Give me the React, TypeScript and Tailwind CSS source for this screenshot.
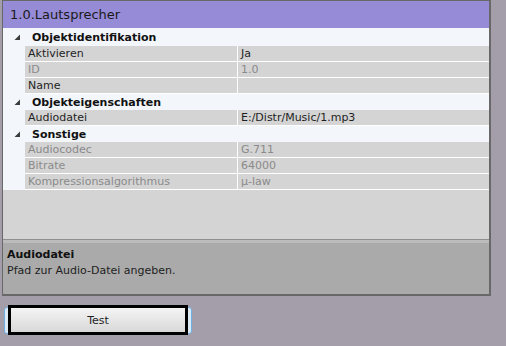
import React from "react";

interface RowType {
  label: string;
  value: string;
  disabled?: boolean;
}

interface GroupType {
  title: string;
  rows: RowType[];
}

const groups: GroupType[] = [
  {
    title: "Objektidentifikation",
    rows: [
      { label: "Aktivieren", value: "Ja" },
      { label: "ID", value: "1.0", disabled: true },
      { label: "Name", value: "" },
    ],
  },
  {
    title: "Objekteigenschaften",
    rows: [{ label: "Audiodatei", value: "E:/Distr/Music/1.mp3" }],
  },
  {
    title: "Sonstige",
    rows: [
      { label: "Audiocodec", value: "G.711", disabled: true },
      { label: "Bitrate", value: "64000", disabled: true },
      { label: "Kompressionsalgorithmus", value: "µ-law", disabled: true },
    ],
  },
];

const Arrow = () => (
  <svg width="7" height="7" viewBox="0 0 7 7" className="shrink-0">
    <polygon points="6,0.5 6,6 0.5,6" fill="#3c3c3c" />
  </svg>
);

const App = () => {
  return (
    <div
      className="w-[506px] h-[346px] bg-[#a39eaa] overflow-hidden text-[11px] leading-none text-[#1e1e1e]"
      style={{ fontFamily: '"DejaVu Sans", Verdana, sans-serif' }}
    >
      <div className="ml-[2px] w-[489px] border-l border-t border-b-2 border-r-2 border-[#686868] flex flex-col">
        <div className="h-[27px] bg-[#968bd6] flex items-center pl-[7px] text-[13px] text-[#1a1a1a]">
          1.0.Lautsprecher
        </div>
        <div className="h-[211px] bg-[#d4d4d4] flex flex-col">
          {groups.map((g, gi) => (
            <div key={g.title} className="flex flex-col">
              <div
                className={`${gi === 0 ? "h-[18px]" : "h-[16px]"} bg-[#f3f6fb] flex items-center gap-[11px] pl-[11px] font-bold text-[#111]`}
              >
                <Arrow />
                <span>{g.title}</span>
              </div>
              {g.rows.map((r) => (
                <div key={r.label} className="h-[16px] flex bg-[#f3f6fb]">
                  <div
                    className={`ml-[22px] w-[213px] border-b border-r border-white bg-[#d4d4d4] flex items-center pl-[3px] ${r.disabled ? "text-[#8a8a8a]" : "text-[#1e1e1e]"}`}
                  >
                    {r.label}
                  </div>
                  <div
                    className={`flex-1 border-b border-white bg-[#d4d4d4] flex items-center pl-[3px] ${r.disabled ? "text-[#8a8a8a]" : "text-[#1e1e1e]"}`}
                  >
                    {r.value}
                  </div>
                </div>
              ))}
            </div>
          ))}
        </div>
        <div className="h-[1px] bg-[#8f8f8f]" />
        <div className="h-[3px] bg-[#bcbcbc]" />
        <div className="h-[51px] bg-[#aaaaaa] px-[4px] pt-[6px] flex flex-col gap-[5px]">
          <span className="font-bold text-[#111]">Audiodatei</span>
          <span className="text-[#1e1e1e]">Pfad zur Audio-Datei angeben.</span>
        </div>
      </div>
      <div className="mt-[11px] ml-[4px] w-[188px] h-[27px] rounded-[3px] border border-[#6fb0e2] bg-[#dceaf5] flex px-[3px]">
        <button className="-mt-[3px] h-[30px] flex-1 border-[3px] border-black bg-gradient-to-b from-[#f4f4f4] to-[#d8d8d8] text-[11px] text-[#1e1e1e] flex items-center justify-center">
          Test
        </button>
      </div>
    </div>
  );
};

export default App;
